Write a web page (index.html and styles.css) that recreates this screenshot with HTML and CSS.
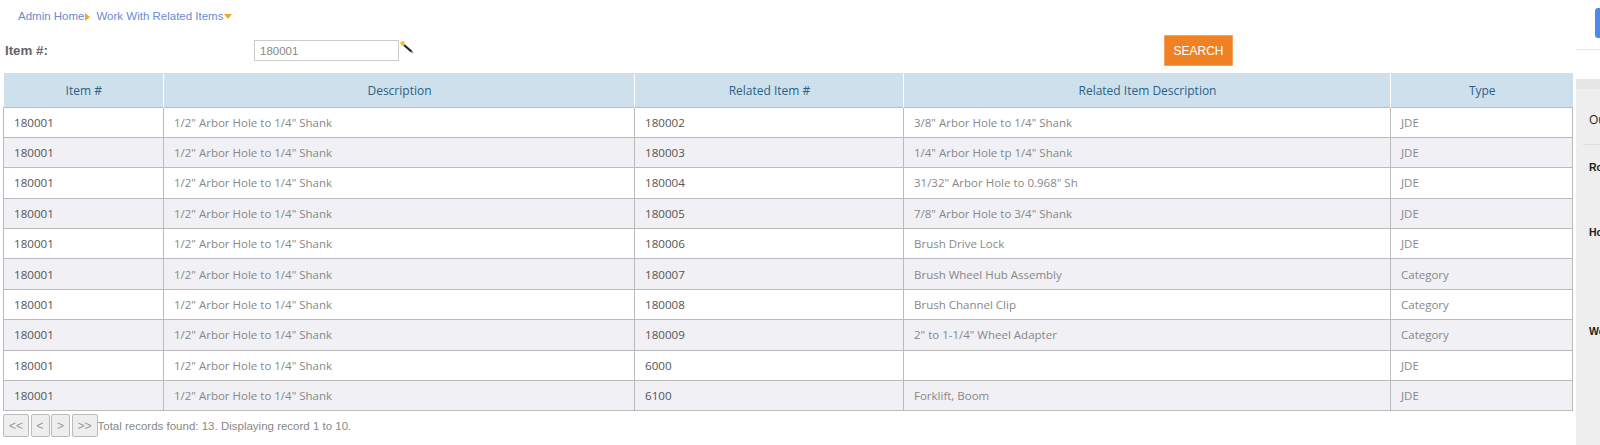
FILE: index.html
```html
<!DOCTYPE html>
<html>
<head>
    <meta charset="utf-8" />
    <title>Work With Related Items</title>
    <link rel="stylesheet" href="styles.css">
</head>
<body>
    <div class="page">
        <div class="main">
            <div class="crumbs">
                <a href="#">Admin Home</a><span class="arrow-right"></span>
                <a href="#" class="crumb-second">Work With Related Items</a><span class="arrow-down"></span>
            </div>
            <form class="search-row" action="#">
                <label class="search-label" for="item">Item #:</label>
                <input type="text" id="item" class="search-input" value="180001" />
                <svg class="wand" width="14" height="14" viewBox="0 0 14 14">
                    <path d="M4 4 L12 11" stroke="#222" stroke-width="2.2" />
                    <path d="M11.5 10.5 L13 12" stroke="#aab" stroke-width="2" />
                    <path d="M0 1 L4 0 L5 3 L3 5 L1 4 Z" fill="#f0c030" />
                </svg>
                <button type="submit" class="search-btn">SEARCH</button>
            </form>
            <table class="grid">
                <colgroup>
                    <col class="col-item">
                    <col class="col-desc">
                    <col class="col-rel">
                    <col class="col-reldesc">
                    <col class="col-type">
                </colgroup>
                <thead>
                    <tr>
                        <th>Item #</th>
                        <th>Description</th>
                        <th>Related Item #</th>
                        <th>Related Item Description</th>
                        <th>Type</th>
                    </tr>
                </thead>
                <tbody>
                    <tr><td class="dark">180001</td><td>1/2" Arbor Hole to 1/4" Shank</td><td class="dark">180002</td><td>3/8" Arbor Hole to 1/4" Shank</td><td>JDE</td></tr>
                    <tr><td class="dark">180001</td><td>1/2" Arbor Hole to 1/4" Shank</td><td class="dark">180003</td><td>1/4" Arbor Hole tp 1/4" Shank</td><td>JDE</td></tr>
                    <tr><td class="dark">180001</td><td>1/2" Arbor Hole to 1/4" Shank</td><td class="dark">180004</td><td>31/32" Arbor Hole to 0.968" Sh</td><td>JDE</td></tr>
                    <tr><td class="dark">180001</td><td>1/2" Arbor Hole to 1/4" Shank</td><td class="dark">180005</td><td>7/8" Arbor Hole to 3/4" Shank</td><td>JDE</td></tr>
                    <tr><td class="dark">180001</td><td>1/2" Arbor Hole to 1/4" Shank</td><td class="dark">180006</td><td>Brush Drive Lock</td><td>JDE</td></tr>
                    <tr><td class="dark">180001</td><td>1/2" Arbor Hole to 1/4" Shank</td><td class="dark">180007</td><td>Brush Wheel Hub Assembly</td><td>Category</td></tr>
                    <tr><td class="dark">180001</td><td>1/2" Arbor Hole to 1/4" Shank</td><td class="dark">180008</td><td>Brush Channel Clip</td><td>Category</td></tr>
                    <tr><td class="dark">180001</td><td>1/2" Arbor Hole to 1/4" Shank</td><td class="dark">180009</td><td>2" to 1-1/4" Wheel Adapter</td><td>Category</td></tr>
                    <tr><td class="dark">180001</td><td>1/2" Arbor Hole to 1/4" Shank</td><td class="dark">6000</td><td></td><td>JDE</td></tr>
                    <tr><td class="dark">180001</td><td>1/2" Arbor Hole to 1/4" Shank</td><td class="dark">6100</td><td>Forklift, Boom</td><td>JDE</td></tr>
                </tbody>
            </table>
            <div class="pager">
                <button class="page-btn first">&lt;&lt;</button>
                <button class="page-btn">&lt;</button>
                <button class="page-btn">&gt;</button>
                <button class="page-btn first">&gt;&gt;</button>
                <span class="pager-text">Total records found: 13. Displaying record 1 to 10.</span>
            </div>
        </div>
        <div class="side">
            <div class="side-top">
                <div class="side-blue"></div>
            </div>
            <div class="side-panel">
                <div class="side-head">Ou</div>
                <div class="side-list">
                    <div class="side-item item-ro">Ro</div>
                    <div class="side-item item-ho">Ho</div>
                    <div class="side-item">We</div>
                </div>
            </div>
        </div>
    </div>
</body>
</html>
```

FILE: styles.css
```css
*, *:before, *:after{
    box-sizing:border-box;
}
html, body{
    margin:0;
    height:445px;
    overflow:hidden;
    background:#fff;
}
.page{
    display:flex;
    height:445px;
}
.main{
    width:1576px;
    flex:none;
    padding-left:3px;
    padding-right:3px;
}
.crumbs{
    height:32px;
    padding:0 0 0 15px;
    font:11.5px/14px "Liberation Sans", Arial, sans-serif;
    display:flex;
    align-items:center;
}
.crumbs a{
    color:#6a8ccb;
    text-decoration:none;
}
.crumb-second{
    margin-left:6px;
}
.arrow-right{
    width:0;
    height:0;
    margin:1px 0 0 1px;
    border-left:5px solid #f5a623;
    border-top:4px solid transparent;
    border-bottom:4px solid transparent;
}
.arrow-down{
    width:0;
    height:0;
    margin:1px 0 0 1px;
    border-top:5px solid #f5a623;
    border-left:4px solid transparent;
    border-right:4px solid transparent;
}
.search-row{
    display:flex;
    align-items:center;
    height:41px;
    padding-bottom:4px;
    margin:0;
}
.search-label{
    width:251px;
    padding-left:2px;
    font:bold 13.3px/16px "Liberation Sans", Arial, sans-serif;
    color:#666;
}
.search-input{
    width:145px;
    height:21px;
    padding:0 5px;
    border:1px solid #ccc;
    font:11.5px "Liberation Sans", Arial, sans-serif;
    color:#888;
}
.wand{
    margin:-5px 0 0 1px;
}
.search-btn{
    width:69px;
    height:31px;
    margin-left:750px;
    border:1px solid #f5a25e;
    background:#f08224;
    color:#fff;
    font:12px "Liberation Sans", Arial, sans-serif;
    padding:0;
}
.grid{
    width:1569px;
    table-layout:fixed;
    border-collapse:collapse;
    font:11.5px "Open Sans", sans-serif;
}
.col-item{ width:160px; }
.col-desc{ width:471px; }
.col-rel{ width:269px; }
.col-reldesc{ width:487px; }
.col-type{ width:182px; }
th{
    height:34px;
    padding:1px 0 0 1px;
    background:#cfe0ed;
    border-left:1px solid #fff;
    font-size:12px;
    font-weight:400;
    color:#2c5f88;
    text-align:center;
}
th:first-child{
    border-left:none;
}
td{
    height:30.4px;
    padding:0 10px;
    border:1px solid #bbb;
    color:#888;
}
td.dark{
    font-size:11.6px;
    color:#555;
}
tbody tr:nth-child(even){
    background:#f0f0f5;
}
.pager{
    display:flex;
    align-items:center;
    margin-top:3px;
    font:11.5px "Liberation Sans", Arial, sans-serif;
    color:#888;
}
.page-btn{
    width:19px;
    height:23px;
    margin-right:1.5px;
    padding:0;
    border:1px solid #bbb;
    border-radius:2px;
    background:#eee;
    color:#999;
    font:12px "Liberation Sans", Arial, sans-serif;
}
.page-btn.first{
    width:26px;
}
.pager-text{
    margin-left:-1.5px;
}
.side{
    flex:1;
    overflow:hidden;
}
.side-top{
    height:50px;
    padding:8px 0 0 19px;
    border-bottom:1px solid #e4e4e4;
    margin-bottom:29px;
}
.side-blue{
    height:30px;
    background:#4d88ec;
    border-radius:3px 0 0 3px;
}
.side-panel{
    height:366px;
    background:#eee;
    border-top:10px solid #e6e6e6;
    font:11px "Liberation Sans", Arial, sans-serif;
    color:#222;
    white-space:nowrap;
}
.side-head{
    height:55px;
    padding:22px 0 0 13px;
    font:12px "Open Sans", sans-serif;
}
.side-list{
    margin-left:7px;
    border-top:1px solid #ddd;
    padding-top:16px;
    padding-left:6px;
}
.side-item{
    font-size:10.5px;
    line-height:12px;
    font-weight:bold;
}
.item-ro{
    height:65px;
}
.item-ho{
    height:99px;
}
```
